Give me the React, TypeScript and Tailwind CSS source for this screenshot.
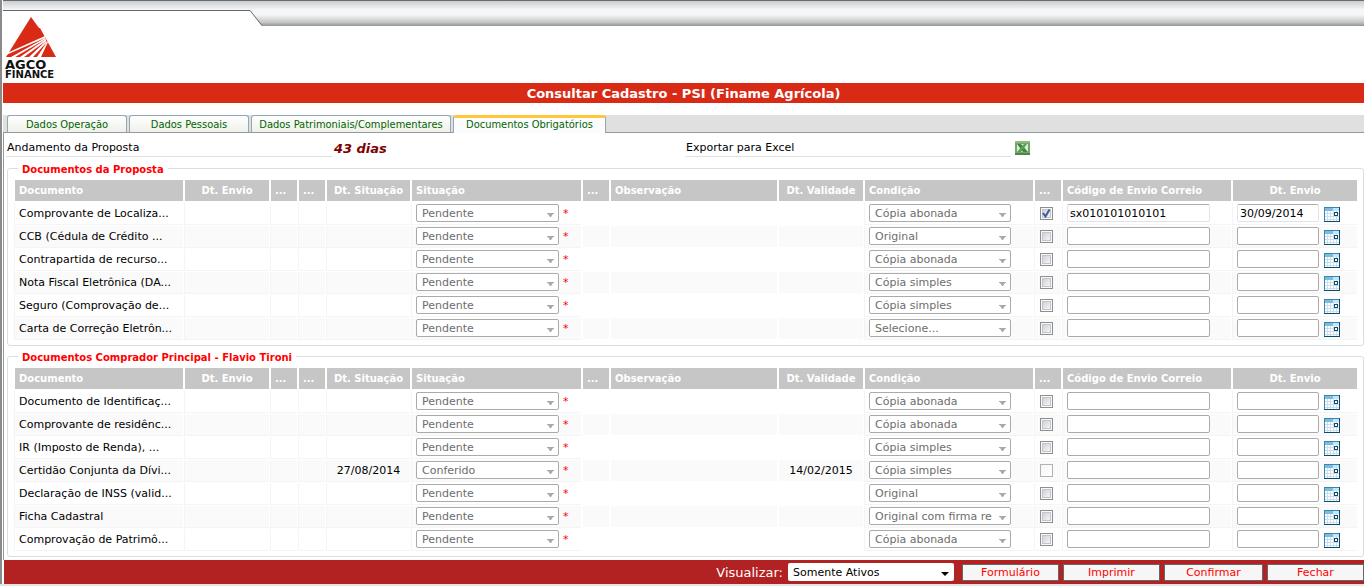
import { useState } from "react";

type Doc = {
  nome: string;
  dtSituacao?: string;
  situacao?: string;
  validade?: string;
  condicao: string;
  marcado?: boolean;
  bloqueado?: boolean;
  codigo?: string;
  dtEnvio?: string;
};

const TABS = [
  { label: "Dados Operação", width: "w-[120px]" },
  { label: "Dados Pessoais", width: "w-[120px]" },
  { label: "Dados Patrimoniais/Complementares", width: "w-[200px]" },
  { label: "Documentos Obrigatórios", width: "w-[153px]" },
];

const COLUMNS = [
  { label: "Documento", width: "w-[169px]", align: "pl-1 text-left" },
  { label: "Dt. Envio", width: "w-[85px]", align: "text-center" },
  { label: "...", width: "w-[27px]", align: "pl-1 text-left" },
  { label: "...", width: "w-[27px]", align: "pl-1 text-left" },
  { label: "Dt. Situação", width: "w-[84px]", align: "text-center" },
  { label: "Situação", width: "w-[170px]", align: "pl-1 text-left" },
  { label: "...", width: "w-[27px]", align: "pl-1 text-left" },
  { label: "Observação", width: "w-[167px]", align: "pl-1 text-left" },
  { label: "Dt. Validade", width: "w-[85px]", align: "text-center" },
  { label: "Condição", width: "w-[169px]", align: "pl-1 text-left" },
  { label: "...", width: "w-[27px]", align: "pl-1 text-left" },
  { label: "Código de Envio Correio", width: "w-[169px]", align: "pl-1 text-left" },
  { label: "Dt. Envio", width: "w-[125px]", align: "text-center" },
];

const ACOES = [
  { label: "Formulário", width: "w-[97px]" },
  { label: "Imprimir", width: "w-[97px]" },
  { label: "Confirmar", width: "w-[99px]" },
  { label: "Fechar", width: "w-[97px]" },
];

const DOCS_PROPOSTA: Doc[] = [
  {
    nome: "Comprovante de Localiza...",
    condicao: "Cópia abonada",
    marcado: true,
    codigo: "sx010101010101",
    dtEnvio: "30/09/2014",
  },
  { nome: "CCB (Cédula de Crédito ...", condicao: "Original" },
  { nome: "Contrapartida de recurso...", condicao: "Cópia abonada" },
  { nome: "Nota Fiscal Eletrônica (DA...", condicao: "Cópia simples" },
  { nome: "Seguro (Comprovação de...", condicao: "Cópia simples" },
  { nome: "Carta de Correção Eletrôn...", condicao: "Selecione..." },
];

const DOCS_COMPRADOR: Doc[] = [
  { nome: "Documento de Identificaç...", condicao: "Cópia abonada" },
  { nome: "Comprovante de residênc...", condicao: "Cópia abonada" },
  { nome: "IR (Imposto de Renda), ...", condicao: "Cópia simples" },
  {
    nome: "Certidão Conjunta da Dívi...",
    dtSituacao: "27/08/2014",
    situacao: "Conferido",
    validade: "14/02/2015",
    condicao: "Cópia simples",
    bloqueado: true,
  },
  { nome: "Declaração de INSS (valid...", condicao: "Original" },
  { nome: "Ficha Cadastral", condicao: "Original com firma re" },
  { nome: "Comprovação de Patrimô...", condicao: "Cópia abonada" },
];

function Logo() {
  return (
    <svg width="56" height="64" viewBox="0 0 56 64" role="img" aria-label="AGCO Finance">
      <path d="M27 1L35 12L36 12L52 41H2Z" fill="#d92a16" />
      <g fill="#fff">
        <path d="M41 20L3 37L2 39L41 22Z" />
        <path d="M41 22L7 41H11L42 23Z" />
        <path d="M42 23L16 41H20L42 25Z" />
        <path d="M42 25L25 41H29L43 26Z" />
        <path d="M43 26L33 41H37L44 26Z" />
      </g>
      <text x="1" y="53" fontFamily="DejaVu Sans, sans-serif" fontWeight="700" fontSize="13" fill="#111">AGCO</text>
      <text x="1" y="62" fontFamily="DejaVu Sans, sans-serif" fontWeight="700" fontSize="10" fill="#111">FINANCE</text>
    </svg>
  );
}

function CalendarIcon() {
  return (
    <svg width="16" height="15" viewBox="0 0 16 15" shapeRendering="crispEdges" aria-hidden="true">
      <path d="M0 0H16V15H0Z" fill="#fff" />
      <path d="M1 1H9V4H1Z" fill="#7fbbdf" />
      <path d="M9 1H15V4H9Z" fill="#bfe6fb" />
      <path d="M1 6H15V7H1ZM1 9H15V10H1ZM1 12H15V13H1Z" fill="#c9dfeb" />
      <path d="M3 4H4V14H3ZM6 4H7V14H6ZM9 4H10V14H9ZM12 4H13V14H12Z" fill="#c9dfeb" />
      <path d="M0 0H16V1H1V15H0Z" fill="#3a86ad" />
      <path d="M15 0H16V15H0V14H15Z" fill="#0f4a6b" />
      <path d="M10 5H14V9H10Z" fill="#0f4a6b" />
      <path d="M11 6H13V8H11Z" fill="#fff" />
    </svg>
  );
}

function ExcelIcon() {
  return (
    <svg width="15" height="14" viewBox="0 0 15 14" aria-hidden="true">
      <path d="M0 0H15V14H0Z" fill="#6fa867" />
      <path d="M0 0H15V2H0Z" fill="#8dba85" />
      <path d="M2 3H13V11H2Z" fill="#dcebd8" />
      <path d="M2 3H6L13 11H8Z" fill="#3f8a3f" />
      <path d="M9 3H12L6 11H2Z" fill="#5a9f55" />
      <path d="M0 12H15V14H0Z" fill="#4c8747" />
    </svg>
  );
}

function DisabledSelect({ value, label, width }: { value: string; label: string; width: string }) {
  return (
    <span className={`relative inline-block h-[18px] align-top ${width}`}>
      <select
        disabled
        aria-label={label}
        className="block h-[18px] w-full appearance-none rounded-xs border border-[#ababab] bg-white pt-[2px] pr-[17px] pl-[5px] text-[11px] leading-[14px] text-[#6d6d6d] opacity-100"
      >
        <option>{value}</option>
      </select>
      <svg className="absolute top-[9px] right-[5px]" width="7" height="4" viewBox="0 0 7 4" aria-hidden="true">
        <path d="M0 0H7V1H6L4 4H3L1 1H0Z" fill="#a8a8a8" />
      </svg>
    </span>
  );
}

function TextField({ value, label, width }: { value?: string; label: string; width: string }) {
  return (
    <input
      type="text"
      defaultValue={value}
      aria-label={label}
      className={`block h-[18px] rounded-xs border bg-white px-[2px] text-[11px] leading-4 text-black ${
        value ? "border-[#e2e3ea] border-t-[#abadb3]" : "border-[#ababab]"
      } ${width}`}
    />
  );
}

function DocRow({ doc, odd }: { doc: Doc; odd: boolean }) {
  const [checked, setChecked] = useState(!!doc.marcado);
  const bg = odd ? "bg-[#fafafa]" : "bg-white";
  const cell = `h-[22px] border-b border-l border-[#f4f4f4] p-0 align-top ${bg}`;
  const plain = `h-[22px] border-b border-l border-white p-0 align-top ${bg}`;
  const text = "block truncate pt-px leading-5";

  return (
    <tr>
      <td className={cell}>
        <span className={`${text} pl-1`}>{doc.nome}</span>
      </td>
      <td className={cell}></td>
      <td className={cell}></td>
      <td className={cell}></td>
      <td className={cell}>
        <span className={`${text} text-center`}>{doc.dtSituacao}</span>
      </td>
      <td className={cell}>
        <div className="flex gap-1 pt-px pl-1">
          <DisabledSelect value={doc.situacao ?? "Pendente"} label="Situação" width="w-[143px]" />
          <span className="leading-5 text-[#f00]">*</span>
        </div>
      </td>
      <td className={plain}></td>
      <td className={plain}></td>
      <td className={plain}>
        <span className={`${text} text-center`}>{doc.validade}</span>
      </td>
      <td className={cell}>
        <div className="pt-px pl-1">
          <DisabledSelect value={doc.condicao} label="Condição" width="w-[142px]" />
        </div>
      </td>
      <td className={cell}>
        <div className="relative mt-1 ml-[5px] size-[13px]">
          <input
            type="checkbox"
            aria-label="Recebido"
            checked={checked}
            disabled={doc.bloqueado}
            onChange={(e) => setChecked(e.target.checked)}
            className="block size-[13px] appearance-none border border-[#8e8f8f] bg-linear-to-br from-[#c4c8cf] to-white shadow-[inset_0_0_0_1px_#f8f8f8,inset_0_0_0_2px_#c3c5ca] disabled:border-[#b1b1b1] disabled:from-[#f6f6f6] disabled:shadow-none"
          />
          {checked && (
            <svg className="pointer-events-none absolute top-0 left-0" width="13" height="13" viewBox="0 0 13 13" aria-hidden="true">
              <path d="M3 6L5.5 9.5L9.5 2.5" fill="none" stroke="#4159a3" strokeWidth="2" />
            </svg>
          )}
        </div>
      </td>
      <td className={cell}>
        <div className="pt-px pl-1">
          <TextField value={doc.codigo} label="Código de Envio Correio" width="w-[143px]" />
        </div>
      </td>
      <td className={cell}>
        <div className="flex gap-[5px] pt-px pl-1">
          <TextField value={doc.dtEnvio} label="Dt. Envio" width="w-[82px]" />
          <button type="button" aria-label="Abrir calendário" className="mt-[3px] h-[15px]">
            <CalendarIcon />
          </button>
        </div>
      </td>
    </tr>
  );
}

function DocTable({ title, docs }: { title: string; docs: Doc[] }) {
  return (
    <fieldset className="min-w-0 rounded-[3px] border border-[#d5dfe5] px-[5px] pt-1 pb-1">
      <legend className="ml-[5px] px-1 pt-[2px] text-[10px] leading-[11px] font-bold text-[#f00]">{title}</legend>
      <table className="w-full table-fixed border-separate border-spacing-px text-[11px]">
        <thead>
          <tr>
            {COLUMNS.map((col, i) => (
              <th
                key={i}
                className={`h-[22px] overflow-hidden border-b border-l border-white bg-[#c6c6c6] py-0 pr-0 text-[10px] leading-5 font-bold whitespace-nowrap text-white ${col.width} ${col.align}`}
              >
                {col.label}
              </th>
            ))}
          </tr>
        </thead>
        <tbody>
          {docs.map((doc, i) => (
            <DocRow key={doc.nome} doc={doc} odd={i % 2 === 1} />
          ))}
        </tbody>
      </table>
    </fieldset>
  );
}

export default function App() {
  const [tab, setTab] = useState(3);

  return (
    <div className="border-b-2 border-[#e4e4e4] bg-white font-['DejaVu_Sans',Verdana,sans-serif] text-[11px] text-black">
      <div className="border-l-2 border-[#8a8a8a] pl-px">
        <header className="h-[83px] border-t border-[#6b6b6b]">
          <div className="h-[25px] bg-[linear-gradient(to_bottom,#cbced0,#f4f6f8_35%,#f4f6f8_55%,#c4c6c7_85%,#949494)]">
            <svg className="block" width="262" height="25" viewBox="0 0 262 25" aria-hidden="true">
              <path d="M0 9.5H247L259 25H0Z" fill="#fff" />
              <path d="M0 9.5H247L259 24.5" fill="none" stroke="#666" />
            </svg>
          </div>
          <div className="-mt-[10px] ml-px">
            <Logo />
          </div>
        </header>

        <h1 className="h-5 bg-[#d92a16] pt-px text-center text-[13px] leading-5 font-bold text-white">
          Consultar Cadastro - PSI (Finame Agrícola)
        </h1>

        <nav className="mt-3 flex h-[18px] gap-[2px] border-b border-[#919b9c] bg-[#e0e0e0] pl-1 font-['DejaVu_Sans_Condensed','Open_Sans',sans-serif]">
          {TABS.map((t, i) => (
            <button
              key={t.label}
              type="button"
              onClick={() => setTab(i)}
              className={`rounded-t-[3px] border-x border-[#91a7b4] text-[11px] whitespace-nowrap text-[#006400] ${t.width} ${
                tab === i
                  ? "-mb-px h-[18px] border-t-[3px] border-t-[#ffc73c] bg-[#fcfcfe] pb-[2px] leading-3"
                  : "h-[17px] border-t bg-linear-to-b from-white to-[#f0f0ea] pt-[2px] leading-[14px]"
              }`}
            >
              {t.label}
            </button>
          ))}
        </nav>

        <main className="border-l border-[#919b9c] pb-[3px]">
          <div className="grid grid-cols-2 pt-[5px] pl-[2px]">
            <div className="flex h-5 gap-[2px]">
              <span className="h-[19px] w-[48%] border-b border-[#e0e0e0] pl-px leading-5">Andamento da Proposta</span>
              <strong className="text-[13px] leading-[22px] text-[#800000] italic">43 dias</strong>
            </div>
            <div className="flex h-5 gap-1">
              <span className="h-[19px] w-[48%] border-b border-[#e0e0e0] pl-px leading-5">Exportar para Excel</span>
              <button type="button" aria-label="Exportar para Excel" className="mt-[3px] h-[14px]">
                <ExcelIcon />
              </button>
            </div>
          </div>

          <div className="flex flex-col gap-1 pt-1 pl-[3px]">
            <DocTable title="Documentos da Proposta" docs={DOCS_PROPOSTA} />
            <DocTable title="Documentos Comprador Principal - Flavio Tironi" docs={DOCS_COMPRADOR} />
          </div>
        </main>

        <footer className="ml-px flex h-6 items-center justify-end gap-[5px] bg-[#b22222] text-[#f00]">
          <label htmlFor="visualizar" className="pt-px text-[13px] text-white">
            Visualizar:
          </label>
          <span className="relative">
            <select
              id="visualizar"
              className="block h-[18px] w-[166px] appearance-none rounded-xs bg-white pt-px pl-[5px] text-[11px] leading-4 text-black"
            >
              <option>Somente Ativos</option>
            </select>
            <svg className="pointer-events-none absolute top-[9px] right-[5px]" width="8" height="4" viewBox="0 0 8 4" aria-hidden="true">
              <path d="M0 0H8L4 4Z" fill="#000" />
            </svg>
          </span>
          <div className="flex gap-1 pl-[3px]">
            {ACOES.map((acao) => (
              <button
                key={acao.label}
                type="button"
                className={`h-[17px] border border-[#666] bg-[#f6f6f6] text-[11px] leading-[15px] ${acao.width}`}
              >
                {acao.label}
              </button>
            ))}
          </div>
        </footer>
      </div>
    </div>
  );
}
